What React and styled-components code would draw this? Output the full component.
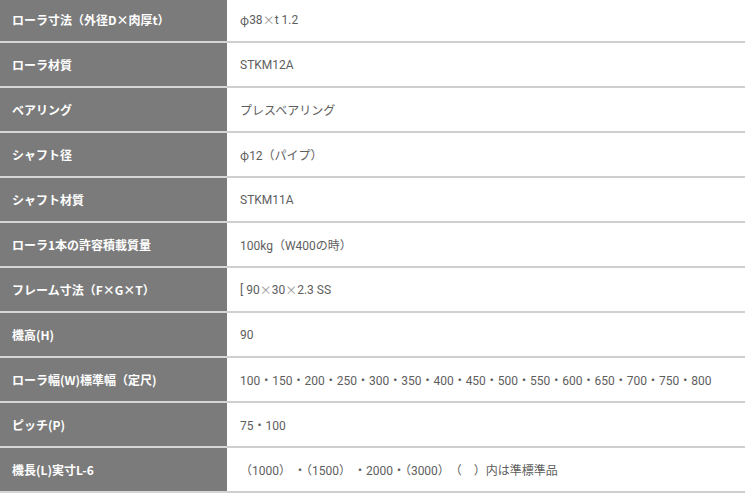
import { Fragment } from 'react';
import styled, { createGlobalStyle } from 'styled-components';

const Global = createGlobalStyle`
  body {
    margin: 0;
    background: #fff;
  }
`;

const Table = styled.div`
  display: grid;
  grid-template-columns: 227px 1fr;
  width: 745px;
  margin-top: -2px;
`;

const Head = styled.div`
  display: flex;
  align-items: center;
  height: 43px;
  padding-left: 12px;
  background: #7b7b7b;
  border-bottom: 2px solid #d6d6d6;
  color: #fff;
  font: bold 12px "Noto Sans CJK JP", sans-serif;
`;

const Cell = styled.div`
  display: flex;
  align-items: center;
  height: 43px;
  padding-left: 13px;
  border-bottom: 2px solid #cfcfcf;
  color: #5e5e5e;
  font: 12px Roboto, "Noto Sans CJK JP", sans-serif;
  white-space: pre;
`;

const Sym = styled.span`
  font-family: "Noto Sans CJK JP", sans-serif;
  color: ${(p) => (p.light ? '#9a9a9a' : 'inherit')};
`;

const rows = [
  ['ローラ寸法（外径D×肉厚t）', <><Sym>φ</Sym>38<Sym light>×</Sym>t 1.2</>],
  ['ローラ材質', 'STKM12A'],
  ['ベアリング', 'プレスベアリング'],
  ['シャフト径', <><Sym>φ</Sym>12（パイプ）</>],
  ['シャフト材質', 'STKM11A'],
  ['ローラ1本の許容積載質量', '100kg（W400の時）'],
  ['フレーム寸法（F×G×T）', <>[ 90<Sym light>×</Sym>30<Sym light>×</Sym>2.3 SS</>],
  ['機高(H)', '90'],
  ['ローラ幅(W)標準幅（定尺)', '100・150・200・250・300・350・400・450・500・550・600・650・700・750・800'],
  ['ピッチ(P)', '75・100'],
  ['機長(L)実寸L-6', '（1000） ・（1500） ・2000・（3000）　（　）内は準標準品'],
];

export default function App() {
  return (
    <>
      <Global />
      <Table>
        {rows.map(([k, v]) => (
          <Fragment key={k}>
            <Head>{k}</Head>
            <Cell>{v}</Cell>
          </Fragment>
        ))}
      </Table>
    </>
  );
}
